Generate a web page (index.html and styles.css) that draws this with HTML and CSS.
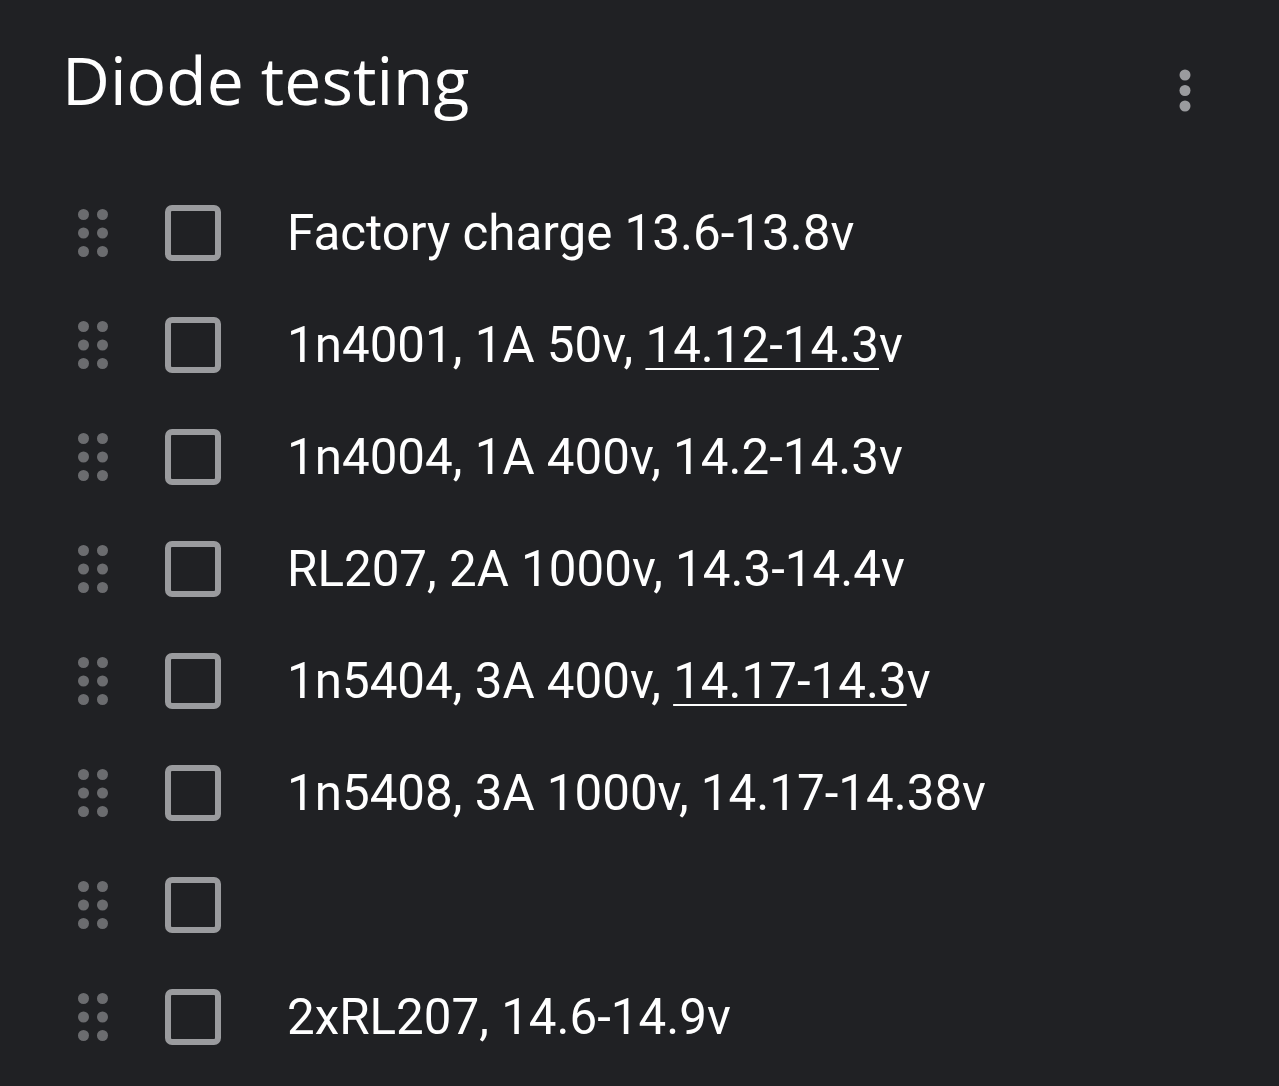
FILE: index.html
```html
<!DOCTYPE html>
<html lang="en">
<head>
<meta charset="utf-8">
<title>Diode testing</title>
<link rel="stylesheet" href="styles.css">
</head>
<body>
<div class="page">
  <header class="header">
    <h1 class="title">Diode testing</h1>
    <svg class="kebab" width="12" height="44" viewBox="0 0 12 44" aria-hidden="true">
      <circle cx="6" cy="6" r="5.5"/>
      <circle cx="6" cy="21.5" r="5.5"/>
      <circle cx="6" cy="37" r="5.5"/>
    </svg>
  </header>
  <ul class="list">
    <li class="item">
      <svg class="handle" width="32" height="48" viewBox="0 0 32 48" aria-hidden="true"><circle cx="6.5" cy="5.5" r="5.5"/><circle cx="25.5" cy="5.5" r="5.5"/><circle cx="6.5" cy="24" r="5.5"/><circle cx="25.5" cy="24" r="5.5"/><circle cx="6.5" cy="42.5" r="5.5"/><circle cx="25.5" cy="42.5" r="5.5"/></svg>
      <span class="box"></span>
      <span class="text">Factory charge 13.6-13.8v</span>
    </li>
    <li class="item">
      <svg class="handle" width="32" height="48" viewBox="0 0 32 48" aria-hidden="true"><circle cx="6.5" cy="5.5" r="5.5"/><circle cx="25.5" cy="5.5" r="5.5"/><circle cx="6.5" cy="24" r="5.5"/><circle cx="25.5" cy="24" r="5.5"/><circle cx="6.5" cy="42.5" r="5.5"/><circle cx="25.5" cy="42.5" r="5.5"/></svg>
      <span class="box"></span>
      <span class="text">1n4001, 1A 50v, <span class="link">14.12-14.3</span>v</span>
    </li>
    <li class="item">
      <svg class="handle" width="32" height="48" viewBox="0 0 32 48" aria-hidden="true"><circle cx="6.5" cy="5.5" r="5.5"/><circle cx="25.5" cy="5.5" r="5.5"/><circle cx="6.5" cy="24" r="5.5"/><circle cx="25.5" cy="24" r="5.5"/><circle cx="6.5" cy="42.5" r="5.5"/><circle cx="25.5" cy="42.5" r="5.5"/></svg>
      <span class="box"></span>
      <span class="text">1n4004, 1A 400v, 14.2-14.3v</span>
    </li>
    <li class="item">
      <svg class="handle" width="32" height="48" viewBox="0 0 32 48" aria-hidden="true"><circle cx="6.5" cy="5.5" r="5.5"/><circle cx="25.5" cy="5.5" r="5.5"/><circle cx="6.5" cy="24" r="5.5"/><circle cx="25.5" cy="24" r="5.5"/><circle cx="6.5" cy="42.5" r="5.5"/><circle cx="25.5" cy="42.5" r="5.5"/></svg>
      <span class="box"></span>
      <span class="text">RL207, 2A 1000v, 14.3-14.4v</span>
    </li>
    <li class="item">
      <svg class="handle" width="32" height="48" viewBox="0 0 32 48" aria-hidden="true"><circle cx="6.5" cy="5.5" r="5.5"/><circle cx="25.5" cy="5.5" r="5.5"/><circle cx="6.5" cy="24" r="5.5"/><circle cx="25.5" cy="24" r="5.5"/><circle cx="6.5" cy="42.5" r="5.5"/><circle cx="25.5" cy="42.5" r="5.5"/></svg>
      <span class="box"></span>
      <span class="text">1n5404, 3A 400v, <span class="link">14.17-14.3</span>v</span>
    </li>
    <li class="item">
      <svg class="handle" width="32" height="48" viewBox="0 0 32 48" aria-hidden="true"><circle cx="6.5" cy="5.5" r="5.5"/><circle cx="25.5" cy="5.5" r="5.5"/><circle cx="6.5" cy="24" r="5.5"/><circle cx="25.5" cy="24" r="5.5"/><circle cx="6.5" cy="42.5" r="5.5"/><circle cx="25.5" cy="42.5" r="5.5"/></svg>
      <span class="box"></span>
      <span class="text">1n5408, 3A 1000v, 14.17-14.38v</span>
    </li>
    <li class="item">
      <svg class="handle" width="32" height="48" viewBox="0 0 32 48" aria-hidden="true"><circle cx="6.5" cy="5.5" r="5.5"/><circle cx="25.5" cy="5.5" r="5.5"/><circle cx="6.5" cy="24" r="5.5"/><circle cx="25.5" cy="24" r="5.5"/><circle cx="6.5" cy="42.5" r="5.5"/><circle cx="25.5" cy="42.5" r="5.5"/></svg>
      <span class="box"></span>
      <span class="text"></span>
    </li>
    <li class="item">
      <svg class="handle" width="32" height="48" viewBox="0 0 32 48" aria-hidden="true"><circle cx="6.5" cy="5.5" r="5.5"/><circle cx="25.5" cy="5.5" r="5.5"/><circle cx="6.5" cy="24" r="5.5"/><circle cx="25.5" cy="24" r="5.5"/><circle cx="6.5" cy="42.5" r="5.5"/><circle cx="25.5" cy="42.5" r="5.5"/></svg>
      <span class="box"></span>
      <span class="text">2xRL207, 14.6-14.9v</span>
    </li>
  </ul>
</div>
</body>
</html>
```
FILE: styles.css
```css
html, body {
  margin: 0;
  padding: 0;
  background: #202124;
}
.page {
  width: 1279px;
  height: 1086px;
  overflow: hidden;
  background: #202124;
  color: #e8eaed;
}
.header {
  display: flex;
  align-items: flex-start;
  justify-content: space-between;
  height: 177px;
  box-sizing: border-box;
  padding: 46px 88px 0 62px;
}
.title {
  margin: 0;
  font-family: "Open Sans", "Roboto", sans-serif;
  font-weight: 400;
  font-size: 66px;
  line-height: 66px;
  color: #ffffff;
  letter-spacing: 0;
}
.kebab {
  margin-top: 23px;
  fill: #9a9b9e;
}
.list {
  list-style: none;
  margin: 0;
  padding: 0;
}
.item {
  display: flex;
  align-items: center;
  height: 112px;
  padding-left: 77px;
}
.handle {
  fill: #6b6c6f;
  flex: none;
}
.box {
  flex: none;
  width: 56px;
  height: 56px;
  box-sizing: border-box;
  border: 6px solid #9a9b9e;
  border-radius: 7px;
  margin-left: 56px;
}
.text {
  margin-left: 66px;
  font-family: "Roboto", sans-serif;
  font-size: 49.3px;
  line-height: 112px;
  color: #ffffff;
  white-space: nowrap;
}
.link {
  text-decoration: underline;
  text-decoration-thickness: 2px;
  text-underline-offset: 6px;
}
```
